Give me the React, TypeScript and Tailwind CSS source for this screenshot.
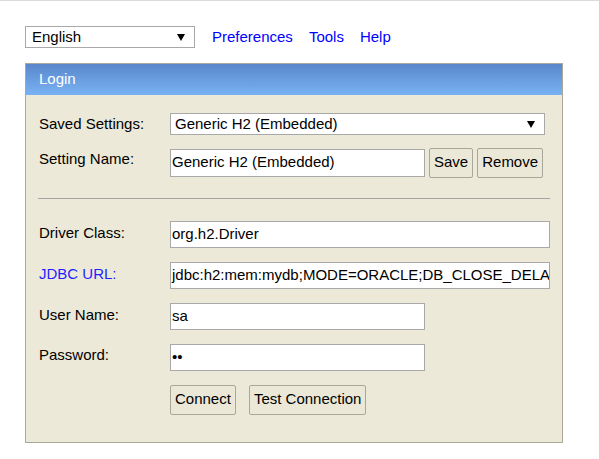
import React from "react";

function Arrow() {
  return (
    <svg width="8" height="7" viewBox="0 0 8 7" className="shrink-0">
      <polygon points="0,0 8,0 4,7" fill="#000" />
    </svg>
  );
}

function Field({ width, value }: { width: string; value: string }) {
  return (
    <div
      className={`${width} h-[27px] flex items-center bg-white border border-[#a9a9a9] pl-[1px] overflow-hidden whitespace-nowrap`}
    >
      {value}
    </div>
  );
}

function Button({ label }: { label: string }) {
  return (
    <div className="h-[30px] flex items-center px-[4px] bg-[#ebe8d8] border border-[#a9a69c] rounded-[2px] whitespace-nowrap">
      {label}
    </div>
  );
}

export default function App() {
  return (
    <div
      className="min-h-screen bg-white border-t border-[#dcdcdc] text-[15px] text-black"
      style={{ fontFamily: '"Liberation Sans", Arial, sans-serif' }}
    >
      <div className="pl-[25px] pt-[25px] h-[22px] box-content flex items-center">
        <div className="w-[170px] h-[22px] flex items-center justify-between pl-[6px] pr-[9px] border border-[#a9a9a9] bg-white">
          <span>English</span>
          <Arrow />
        </div>
        <div className="ml-[17px] flex gap-[16px] text-[#0000ff]">
          <span>Preferences</span>
          <span>Tools</span>
          <span>Help</span>
        </div>
      </div>

      <div className="ml-[25px] mt-[15px] w-[538px] border border-[#aca899] bg-[#ece9d8]">
        <div className="h-[31px] flex items-center pl-[13px] text-white bg-gradient-to-b from-[#5a87cc] to-[#79b3f3]">
          Login
        </div>

        <div className="pl-[13px] pr-[12px] pb-[27px]">
          <div className="mt-[18px] flex items-center">
            <div className="w-[131px]">Saved Settings:</div>
            <div className="w-[375px] h-[22px] flex items-center justify-between pl-[4px] pr-[9px] border border-[#a9a9a9] bg-white">
              <span>Generic H2 (Embedded)</span>
              <Arrow />
            </div>
          </div>

          <div className="mt-[12px] flex items-start">
            <div className="w-[131px] mt-[1px] leading-[20px]">Setting Name:</div>
            <div className="mt-[1px] w-[255px] h-[28px] flex items-center bg-white border border-[#a9a9a9] pl-[1px]">
              Generic H2 (Embedded)
            </div>
            <div className="ml-[4px]">
              <Button label="Save" />
            </div>
            <div className="ml-[4px]">
              <Button label="Remove" />
            </div>
          </div>

          <div className="mt-[20px] ml-[-1px] h-px bg-[#a3a3a3]" />

          <div className="mt-[22px] flex items-center">
            <div className="w-[131px] -mt-[1px]">Driver Class:</div>
            <Field width="w-[380px]" value="org.h2.Driver" />
          </div>

          <div className="mt-[14px] flex items-center">
            <div className="w-[131px] -mt-[1px] text-[#1f1fff]">JDBC URL:</div>
            <Field width="w-[380px]" value="jdbc:h2:mem:mydb;MODE=ORACLE;DB_CLOSE_DELAY=-1" />
          </div>

          <div className="mt-[14px] flex items-center">
            <div className="w-[131px] -mt-[2px]">User Name:</div>
            <Field width="w-[255px]" value="sa" />
          </div>

          <div className="mt-[14px] flex items-center">
            <div className="w-[131px] -mt-[3px]">Password:</div>
            <Field width="w-[255px]" value="••" />
          </div>

          <div className="mt-[14px] flex pl-[131px] gap-[13px]">
            <Button label="Connect" />
            <Button label="Test Connection" />
          </div>
        </div>
      </div>
    </div>
  );
}
